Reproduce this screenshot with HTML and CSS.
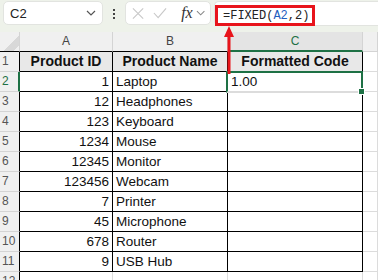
FILE: index.html
```html
<!DOCTYPE html>
<html lang="en">
<head>
    <meta charset="UTF-8">
    <meta name="viewport" content="width=device-width, initial-scale=1.0">
    <title>FIXED - Formatted Code</title>
    <link rel="stylesheet" href="styles.css">
</head>
<body>
    <div class="toolbar">
        <div class="namebox">
            <span>C2</span>
            <svg class="chev" width="10" height="6" viewBox="0 0 10 6"><path d="M1 1l4 4 4-4" fill="none" stroke="#555" stroke-width="1.2"/></svg>
        </div>
        <div class="dots"><i></i><i></i><i></i></div>
        <div class="fx-buttons">
            <svg width="13" height="13" viewBox="0 0 13 13"><path d="M1 1l11 11M12 1L1 12" stroke="#c8c8c8" stroke-width="1.2"/></svg>
            <svg width="15" height="12" viewBox="0 0 15 12"><path d="M1 6l4.5 5L14 1" fill="none" stroke="#c8c8c8" stroke-width="1.2"/></svg>
            <span class="fx">fx</span>
            <svg class="chev" width="10" height="6" viewBox="0 0 10 6"><path d="M1 1l4 4 4-4" fill="none" stroke="#888" stroke-width="1.1"/></svg>
        </div>
        <div class="formula">
            <span class="formula-text">=FIXED(<span class="ref">A2</span>,2)</span>
        </div>
    </div>

    <div class="sheet">
        <div class="corner"></div>
        <div class="col-head">A</div>
        <div class="col-head">B</div>
        <div class="col-head selected">C</div>
        <div class="col-head last"></div>

        <div class="row-head">1</div>
        <div class="cell head">Product ID</div>
        <div class="cell head">Product Name</div>
        <div class="cell head">Formatted Code</div>
        <div class="grid-cell"></div>

        <div class="row-head selected">2</div>
        <div class="cell num">1</div>
        <div class="cell">Laptop</div>
        <div class="cell">1.00</div>
        <div class="grid-cell"></div>

        <div class="row-head">3</div>
        <div class="cell num">12</div>
        <div class="cell">Headphones</div>
        <div class="cell"></div>
        <div class="grid-cell"></div>

        <div class="row-head">4</div>
        <div class="cell num">123</div>
        <div class="cell">Keyboard</div>
        <div class="cell"></div>
        <div class="grid-cell"></div>

        <div class="row-head">5</div>
        <div class="cell num">1234</div>
        <div class="cell">Mouse</div>
        <div class="cell"></div>
        <div class="grid-cell"></div>

        <div class="row-head">6</div>
        <div class="cell num">12345</div>
        <div class="cell">Monitor</div>
        <div class="cell"></div>
        <div class="grid-cell"></div>

        <div class="row-head">7</div>
        <div class="cell num">123456</div>
        <div class="cell">Webcam</div>
        <div class="cell"></div>
        <div class="grid-cell"></div>

        <div class="row-head">8</div>
        <div class="cell num">7</div>
        <div class="cell">Printer</div>
        <div class="cell"></div>
        <div class="grid-cell"></div>

        <div class="row-head">9</div>
        <div class="cell num">45</div>
        <div class="cell">Microphone</div>
        <div class="cell"></div>
        <div class="grid-cell"></div>

        <div class="row-head">10</div>
        <div class="cell num">678</div>
        <div class="cell">Router</div>
        <div class="cell"></div>
        <div class="grid-cell"></div>

        <div class="row-head">11</div>
        <div class="cell num">9</div>
        <div class="cell">USB Hub</div>
        <div class="cell"></div>
        <div class="grid-cell"></div>

        <div class="row-head">12</div>
        <div class="grid-cell"></div>
        <div class="grid-cell"></div>
        <div class="grid-cell"></div>
        <div class="grid-cell"></div>

        <!-- active cell C2 -->
        <div class="selection"><span class="handle"></span></div>
    </div>

    <!-- annotation arrow -->
    <svg class="arrow" width="12" height="48" viewBox="0 0 12 48">
        <path d="M6 0L11 11H7.5V48h-3V11H1z" fill="#e8141b"/>
    </svg>
</body>
</html>
```

FILE: styles.css
```css
body {
    margin: 0;
    width: 378px;
    height: 280px;
    overflow: hidden;
    background: #fff;
    font-family: "Liberation Sans", Arial, sans-serif;
    position: relative;
}

/* formula bar */
.toolbar {
    display: flex;
    align-items: flex-start;
    height: 32px;
    box-sizing: border-box;
    padding: 1px 0 0 3px;
    background: #eef2ea;
}
.namebox {
    display: flex;
    align-items: center;
    justify-content: space-between;
    width: 100px;
    height: 24px;
    box-sizing: border-box;
    padding: 0 6px 0 6px;
    background: #fff;
    border: 1px solid #e2e4e0;
    border-radius: 5px;
    font-size: 13px;
    color: #222;
}
.dots {
    display: flex;
    flex-direction: column;
    gap: 2px;
    width: 22px;
    align-items: center;
    padding-top: 8px;
}
.dots i {
    width: 2px;
    height: 2px;
    background: #444;
}
.fx-buttons {
    display: flex;
    align-items: center;
    gap: 9px;
    width: 86px;
    height: 24px;
    box-sizing: border-box;
    padding: 0 5px 0 6px;
    background: #fff;
    border: 1px solid #e2e4e0;
    border-radius: 5px;
}
.fx {
    font-family: "Liberation Serif", serif;
    font-style: italic;
    font-size: 16px;
    color: #333;
    margin-left: 5px;
    margin-right: -6px;
}
.formula {
    flex: 1;
    height: 25px;
    margin-left: 3px;
    background: #fff;
    border: 1px solid #e2e4e0;
    border-right: none;
    border-radius: 5px 0 0 5px;
    box-sizing: border-box;
}
.formula-text {
    display: inline-block;
    margin: 3px 0 0 0;
    padding: 1px 3px 0 5px;
    height: 21px;
    box-sizing: border-box;
    border: 3px solid #e8141b;
    font-family: "Liberation Mono", monospace;
    font-size: 12px;
    line-height: 15px;
    color: #222;
}
.ref {
    color: #1f5fbf;
}

/* sheet grid */
.sheet {
    position: relative;
    display: grid;
    grid-template-columns: 20px 93px 115px 135px 1fr;
    grid-auto-rows: 20px;
    font-size: 13.5px;
    color: #111;
}
.sheet > div {
    box-sizing: border-box;
}
.corner {
    background: #f0f0f0 linear-gradient(135deg, transparent 60%, #d8d8d8 60%, #d8d8d8 85%, transparent 85%);
    border-right: 1px solid #d4d4d4;
    border-bottom: 1px solid #000;
}
.col-head {
    background: #f0f0f0;
    border-right: 1px solid #d4d4d4;
    border-bottom: 1px solid #000;
    text-align: center;
    font-size: 12px;
    line-height: 19px;
    color: #444;
}
.col-head.selected {
    background: #e4e4e4;
    color: #1e7145;
    border-bottom: 2px solid #1e7145;
}
.col-head.last {
    border-bottom-color: #d4d4d4;
}
.row-head {
    background: #f0f0f0;
    border-right: 1px solid #000;
    border-bottom: 1px solid #d4d4d4;
    font-size: 12px;
    line-height: 19px;
    padding-left: 2px;
    color: #555;
}
.row-head.selected {
    color: #1e7145;
    border-right: 2px solid #1e7145;
}
.cell {
    border-right: 1px solid #000;
    border-bottom: 1px solid #000;
    padding: 0 3px;
    line-height: 19px;
    white-space: nowrap;
}
.cell.num {
    text-align: right;
}
.cell.head {
    background: #e8e8e8;
    font-weight: bold;
    font-size: 14px;
    text-align: center;
}
.grid-cell {
    border-right: 1px solid #dcdcdc;
    border-bottom: 1px solid #dcdcdc;
}
.sheet > div:nth-last-child(-n+5) {
    border-bottom-color: #dcdcdc;
}

/* active cell */
.selection {
    position: absolute;
    left: 226px;
    top: 39px;
    width: 137px;
    height: 22px;
    border: 2px solid #1e7145;
}
.handle {
    position: absolute;
    right: -4px;
    bottom: -4px;
    width: 5px;
    height: 5px;
    background: #1e7145;
    border: 1px solid #fff;
}

.arrow {
    position: absolute;
    left: 223px;
    top: 26px;
}
```
